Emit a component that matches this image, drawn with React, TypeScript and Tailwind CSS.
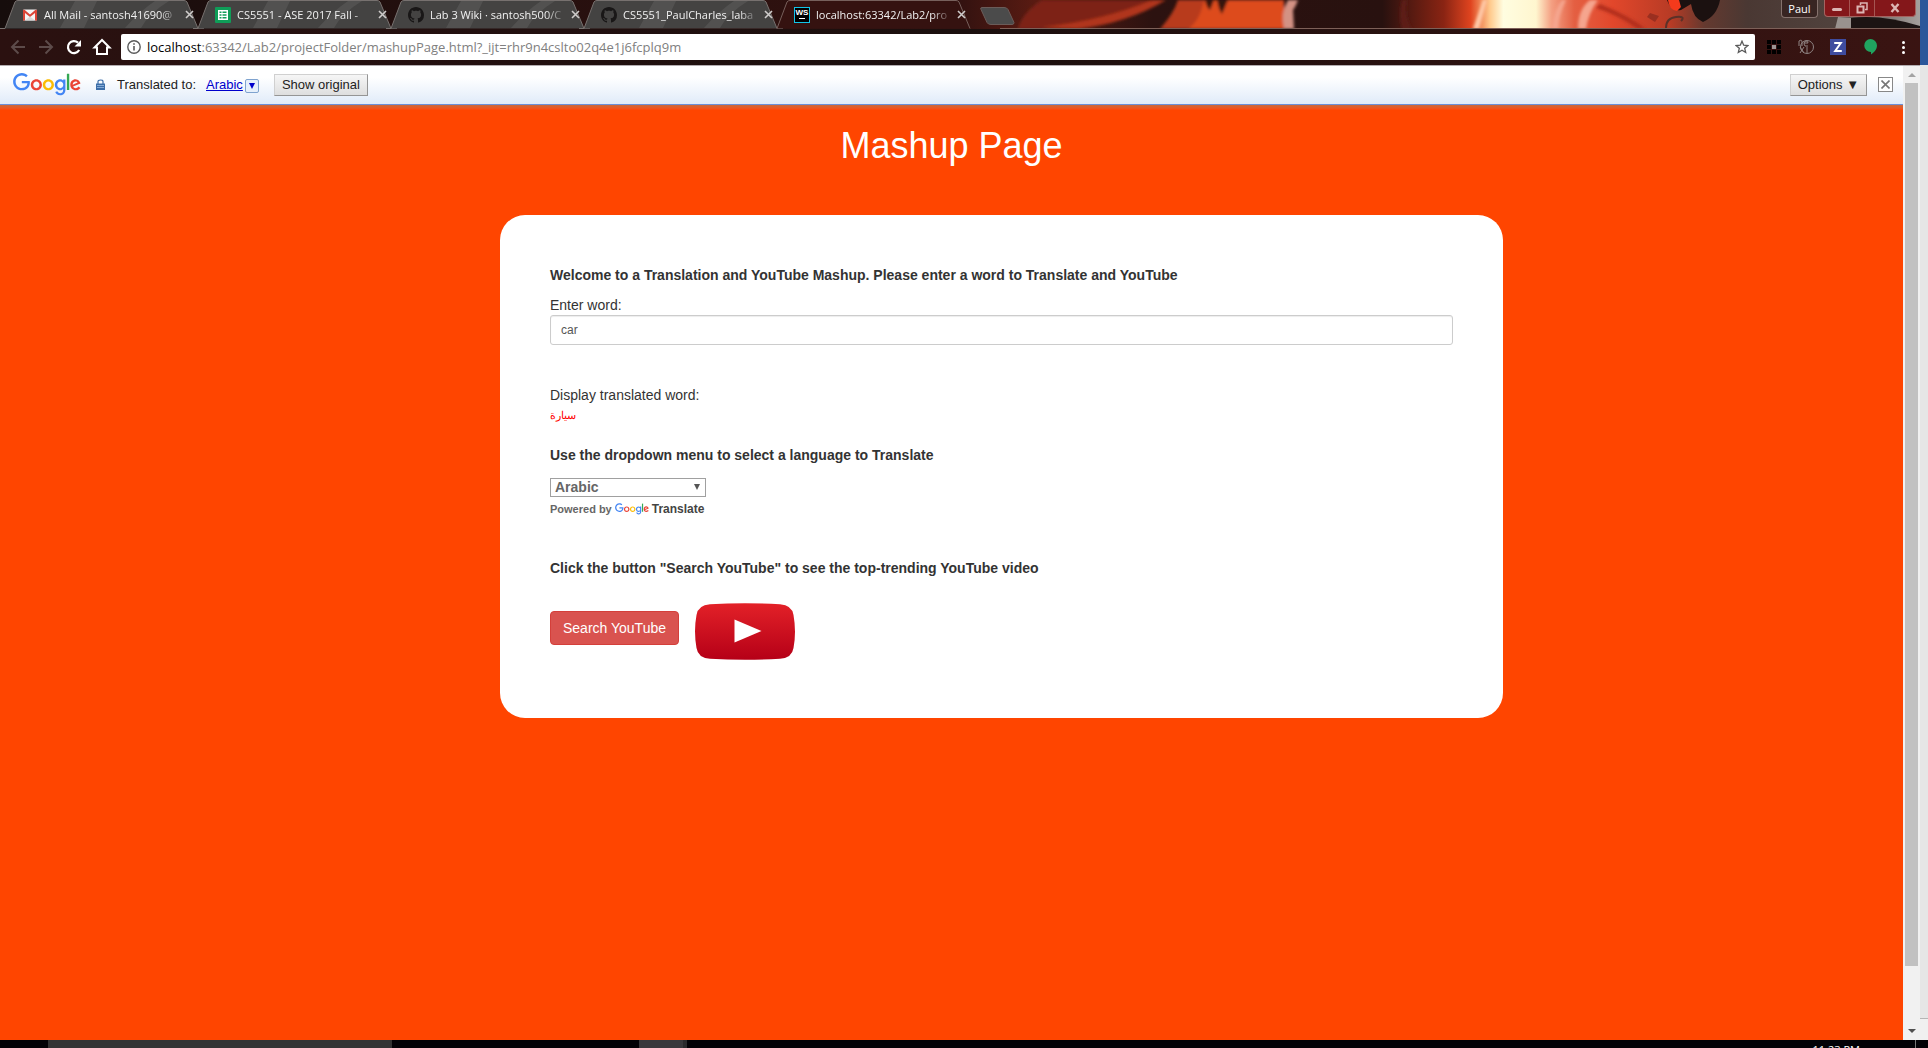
import React, { useId } from "react";

const UI = "font-['Open_Sans','Noto_Sans',sans-serif]";

function GoogleLogo({ className }: { className: string }) {
  return (
    <svg viewBox="0 0 272 92" className={className} role="img" aria-label="Google">
      <path fill="#EA4335" d="M115.75 47.18c0 12.77-9.99 22.18-22.25 22.18s-22.25-9.41-22.25-22.18C71.25 34.32 81.24 25 93.5 25s22.25 9.32 22.25 22.18zm-9.74 0c0-7.98-5.79-13.44-12.51-13.44S80.99 39.2 80.99 47.18c0 7.9 5.79 13.44 12.51 13.44s12.51-5.55 12.51-13.44z" />
      <path fill="#FBBC05" d="M163.75 47.18c0 12.77-9.99 22.18-22.25 22.18s-22.25-9.41-22.25-22.18c0-12.85 9.99-22.18 22.25-22.18s22.25 9.32 22.25 22.18zm-9.74 0c0-7.98-5.79-13.44-12.51-13.44s-12.51 5.46-12.51 13.44c0 7.9 5.79 13.44 12.51 13.44s12.51-5.55 12.51-13.44z" />
      <path fill="#4285F4" d="M209.75 26.34v39.82c0 16.38-9.66 23.07-21.08 23.07-10.75 0-17.22-7.19-19.66-13.07l8.48-3.53c1.51 3.61 5.21 7.87 11.17 7.87 7.31 0 11.84-4.51 11.84-13v-3.19h-.34c-2.18 2.69-6.38 5.04-11.68 5.04-11.09 0-21.25-9.66-21.25-22.09 0-12.52 10.16-22.26 21.25-22.26 5.29 0 9.49 2.35 11.68 4.96h.34v-3.61h9.25zm-8.56 20.92c0-7.81-5.21-13.52-11.84-13.52-6.72 0-12.35 5.71-12.35 13.52 0 7.73 5.63 13.36 12.35 13.36 6.63 0 11.84-5.63 11.84-13.36z" />
      <path fill="#34A853" d="M225 3v65h-9.5V3h9.5z" />
      <path fill="#EA4335" d="M262.02 54.48l7.56 5.04c-2.44 3.61-8.32 9.83-18.48 9.83-12.6 0-22.01-9.74-22.01-22.18 0-13.19 9.49-22.18 20.92-22.18 11.51 0 17.14 9.16 18.98 14.11l1.01 2.52-29.65 12.28c2.27 4.45 5.8 6.72 10.75 6.72 4.96 0 8.4-2.44 10.92-6.14zm-23.27-7.98l19.82-8.23c-1.09-2.77-4.37-4.7-8.23-4.7-4.95 0-11.84 4.37-11.59 12.93z" />
      <path fill="#4285F4" d="M35.29 41.41V32H67c.31 1.64.47 3.58.47 5.68 0 7.06-1.93 15.79-8.15 22.01-6.05 6.3-13.78 9.66-24.02 9.66C16.32 69.35.36 53.89.36 34.91.36 15.93 16.32.47 35.3.47c10.5 0 17.98 4.12 23.6 9.49l-6.64 6.64c-4.03-3.78-9.49-6.72-16.97-6.72-13.86 0-24.7 11.17-24.7 25.03 0 13.86 10.84 25.03 24.7 25.03 8.99 0 14.11-3.61 17.39-6.89 2.66-2.66 4.41-6.46 5.1-11.65l-22.49.01z" />
    </svg>
  );
}

function GmailIcon() {
  return (
    <svg viewBox="0 0 16 16" className="size-4 shrink-0" aria-hidden="true">
      <rect x="1" y="2.5" width="14" height="11" rx="1" fill="#f5f5f5" />
      <path d="M1 3.5v10h2V6l5 4 5-4v7.5h2v-10c0-1-1-1-1.5-.7L8 7.6 2.5 2.8C2 2.5 1 2.5 1 3.5z" fill="#db4437" />
      <path d="M3 13.5 8 9.5l5 4z" fill="#d8d8d8" />
    </svg>
  );
}

function SheetsIcon() {
  return (
    <svg viewBox="0 0 16 16" className="size-4 shrink-0" aria-hidden="true">
      <rect width="16" height="16" rx="1" fill="#0f9d58" />
      <path d="M3 3h10v10H3z" fill="#fff" />
      <path d="M4.5 4.5h2V6h-2zM7.5 4.5h4V6h-4zM4.5 7.2h2v1.5h-2zM7.5 7.2h4v1.5h-4zM4.5 10h2v1.5h-2zM7.5 10h4v1.5h-4z" fill="#0f9d58" />
    </svg>
  );
}

function GithubIcon() {
  return (
    <svg viewBox="0 0 16 16" className="size-4 shrink-0" aria-hidden="true">
      <path fill="#191717" d="M8 0C3.58 0 0 3.58 0 8c0 3.54 2.29 6.53 5.47 7.59.4.07.55-.17.55-.38 0-.19-.01-.82-.01-1.49-2.01.37-2.53-.49-2.69-.94-.09-.23-.48-.94-.82-1.13-.28-.15-.68-.52-.01-.53.63-.01 1.08.58 1.23.82.72 1.21 1.87.87 2.33.66.07-.52.28-.87.51-1.07-1.78-.2-3.64-.89-3.64-3.95 0-.87.31-1.59.82-2.15-.08-.2-.36-1.02.08-2.12 0 0 .67-.21 2.2.82.64-.18 1.32-.27 2-.27s1.36.09 2 .27c1.53-1.04 2.2-.82 2.2-.82.44 1.1.16 1.92.08 2.12.51.56.82 1.27.82 2.15 0 3.07-1.87 3.75-3.65 3.95.29.25.54.73.54 1.48 0 1.07-.01 1.93-.01 2.2 0 .21.15.46.55.38A8.01 8.01 0 0 0 16 8c0-4.42-3.58-8-8-8z" />
    </svg>
  );
}

function WebStormIcon() {
  return (
    <span className="flex size-4 shrink-0 flex-col items-center border border-[#12c4e8] bg-black font-['Liberation_Sans',sans-serif] text-[8px] leading-[10px] font-bold text-white">
      WS
      <span className="h-px w-[6px] bg-white" />
    </span>
  );
}

const tabs = [
  { title: "All Mail - santosh41690@", icon: <GmailIcon />, active: false },
  { title: "CS5551 - ASE 2017 Fall -", icon: <SheetsIcon />, active: false },
  { title: "Lab 3 Wiki · santosh500/C", icon: <GithubIcon />, active: false },
  { title: "CS5551_PaulCharles_laba", icon: <GithubIcon />, active: false },
  { title: "localhost:63342/Lab2/pro", icon: <WebStormIcon />, active: true },
];

function Tab({ title, icon, active }: { title: string; icon: React.ReactNode; active: boolean }) {
  return (
    <div className={"relative -mr-[11px] h-[29px] w-[204px] shrink-0 " + (active ? "z-10" : "")}>
      <svg viewBox="0 0 204 29" className="absolute inset-0 size-full" aria-hidden="true">
        <path
          d="M0 28.5h5L15 2q1-1.5 3-1.5h166q2 0 3 1.5l11 26.5h6"
          fill={active ? "#351210" : "#444342"}
          stroke={active ? "none" : "#77716f"}
        />
        {!active && <path d="M60 28 75 1h22L84 28zM125 28q15-17 30-27h14q-20 12-28 27z" fill="#fff" opacity=".08" />}
        {active && <path d="M5 28.5 15 2q1-1.5 3-1.5h166q2 0 3 1.5l11 26.5" fill="none" stroke="#77605c" />}
      </svg>
      <div className="relative flex h-[29px] items-center pr-[10px] pl-[22px]">
        {icon}
        <button type="button" className="ml-[6px] w-[136px] [mask-image:linear-gradient(to_right,#000_85%,transparent)] text-left text-[11px] leading-4 whitespace-nowrap text-[#f1f1f1]">
          {title}
        </button>
        <button type="button" aria-label="Close tab" className="ml-[5px] flex size-[9px] items-center">
          <svg viewBox="0 0 9 9" className="size-[9px]" aria-hidden="true">
            <path d="M1 1l7 7M8 1 1 8" stroke="#cfcccb" strokeWidth="1.6" />
          </svg>
        </button>
      </div>
    </div>
  );
}

function ThemeArt() {
  return (
    <svg viewBox="0 0 1920 29" preserveAspectRatio="none" className="absolute inset-0 size-full" aria-hidden="true">
      <defs>
        <linearGradient id="base">
          <stop offset="0" stopColor="#160d0c" />
          <stop offset=".5" stopColor="#331210" />
          <stop offset=".54" stopColor="#5a1b12" />
          <stop offset=".6" stopColor="#2c1210" />
          <stop offset=".72" stopColor="#28110f" />
          <stop offset=".752" stopColor="#8a2413" />
          <stop offset=".766" stopColor="#e0441f" />
          <stop offset=".776" stopColor="#ffc98c" />
          <stop offset=".783" stopColor="#fffde0" />
          <stop offset=".8" stopColor="#fff6cf" />
          <stop offset=".808" stopColor="#f4a083" />
          <stop offset=".82" stopColor="#e45f42" />
          <stop offset=".84" stopColor="#e2472b" />
          <stop offset=".87" stopColor="#b83b25" />
          <stop offset=".888" stopColor="#64392f" />
          <stop offset=".91" stopColor="#4a3833" />
          <stop offset=".96" stopColor="#51433e" />
          <stop offset="1" stopColor="#a5a09d" />
        </linearGradient>
        <filter id="soft" x="-10%" y="-30%" width="120%" height="160%">
          <feGaussianBlur stdDeviation="1.5" />
        </filter>
      </defs>
      <rect width="1920" height="29" fill="url(#base)" />
      <g filter="url(#soft)">
        <path d="M1018 29q4-16 24-29h118q-30 20-80 29z" fill="#7d2416" />
        <path d="M1042 27q60-6 110-27h14q-40 24-90 29z" fill="#b0351a" />
        <path d="M1160 29q14-16 18-29h40q8 14 4 29z" fill="#b83a1a" />
        <path d="M1188 29q12-8 16-29h80v29z" fill="#dd4c1c" />
        <path d="M1205 0q2 8 5 10l4-10zM1217 0q2 10 5 14l6-14z" fill="#35120e" />
        <path d="M1284 29q-4-16 4-29h10q-2 6-5 10l1 19z" fill="#d39284" />
        <path d="M1402 29q-4-14 0-29h5q-3 16 5 29z" fill="#5d1d12" />
        <path d="M1473 29 1483 0h4l-8 29z" fill="#ffc9a8" />
        <path d="M1552 29q2-20 10-29h4q-8 16-8 29zM1578 29q0-20 12-29h8q-10 14-12 29z" fill="#f5a58e" />
        <path d="M1600 4q30 12 46 25h-8q-20-14-42-21z" fill="#b22f1c" />
      </g>
      <path d="M1650 13l9 3-4 6-8-5z" fill="#9a2f20" />
      <path d="M1667 0q4 12 14 10l10-6q2 14 12 18 14-6 17-22z" fill="#1b1110" />
      <path d="M1668 0q1 10 9 11l4-4-2-7z" fill="#f43a1c" />
      <path d="M1666 28q0-10 10-11t5 4" fill="none" stroke="#5b3128" strokeWidth="2" />
      <path d="M1835 29l3-12 16 1-3 11z" fill="#99928e" />
      <path d="M1851 18q30-4 69 8v3h-69z" fill="#1c1413" />
      <path d="M1000 28.5h920" stroke="#7d6058" strokeWidth="1" />
    </svg>
  );
}

function TabStrip() {
  return (
    <header className="relative flex h-[29px] overflow-hidden">
      <ThemeArt />
      <nav aria-label="Tabs" className="relative flex">
        {tabs.map((t) => (
          <Tab key={t.title} {...t} />
        ))}
        <button type="button" aria-label="New tab" className="mt-[7px] ml-[14px] h-[18px] w-9">
          <svg viewBox="0 0 36 18" className="h-[18px] w-9" aria-hidden="true">
            <path d="M3 .5h22q3 0 4 2l6 13q0 2-2 2H12q-3 0-4-2L2 2.500q-1-2 1-2z" fill="#4b4b4b" stroke="#6b5c59" />
          </svg>
        </button>
      </nav>
      <div className="relative mr-1 ml-auto flex h-[18px] items-start">
        <button type="button" className="mr-[6px] h-[18px] w-[37px] rounded-b border border-t-0 border-[#85726d] bg-[#382522] text-[11px] leading-[17px] text-white">
          Paul
        </button>
        <div className="flex h-[17px] divide-x divide-[#a55552] overflow-hidden rounded-b border border-t-0 border-[#a56360] bg-[#84171a]">
          <button type="button" aria-label="Minimize" className="flex w-[25px] items-center justify-center">
            <span className="mt-[3px] h-[3px] w-[10px] rounded-xs bg-[#dcb5b3]" />
          </button>
          <button type="button" aria-label="Restore" className="flex w-[25px] items-center justify-center">
            <svg viewBox="0 0 12 12" className="size-3" aria-hidden="true">
              <path d="M4.500 3V1h6.500v6.500H9" fill="none" stroke="#dcb5b3" strokeWidth="1.500" />
              <path d="M1.500 4.500h6v6h-6z" fill="none" stroke="#dcb5b3" strokeWidth="2" />
            </svg>
          </button>
          <button type="button" aria-label="Close" className="flex w-[40px] items-center justify-center">
            <svg viewBox="0 0 10 10" className="size-[10px]" aria-hidden="true">
              <path d="M1.500 1l7 8M8.500 1l-7 8" stroke="#dcb5b3" strokeWidth="2.400" />
            </svg>
          </button>
        </div>
      </div>
    </header>
  );
}

function Toolbar() {
  return (
    <div className="flex h-[37px] items-center border-b border-[#b3adb0] bg-linear-to-r from-[#2b1110] via-[#1b0f0e] to-[#3a1412] pr-[14px] pl-[10px]">
      <div className="flex w-[111px] items-center gap-[12px]">
        <button type="button" aria-label="Back" className="size-4">
          <svg viewBox="0 0 16 16" className="size-4" fill="none" stroke="#5d4b4a" strokeWidth="2" aria-hidden="true">
            <path d="M15 8H2.500M8.500 1.500 2 8l6.500 6.500" />
          </svg>
        </button>
        <button type="button" aria-label="Forward" className="size-4">
          <svg viewBox="0 0 16 16" className="size-4" fill="none" stroke="#5d4b4a" strokeWidth="2" aria-hidden="true">
            <path d="M1 8h12.500M7.500 1.500 14 8l-6.500 6.500" />
          </svg>
        </button>
        <button type="button" aria-label="Reload" className="size-4">
          <svg viewBox="0 0 16 16" className="size-4" aria-hidden="true">
            <path d="M13.200 11A6 6 0 1 1 12 3.600" fill="none" stroke="#fff" strokeWidth="2.200" />
            <path d="M15 1v6.500H8.500z" fill="#fff" />
          </svg>
        </button>
        <button type="button" aria-label="Home" className="size-4">
          <svg viewBox="0 0 16 16" className="size-4 overflow-visible" aria-hidden="true">
            <path d="M8 1 .5 8.500H3V15h10V8.500h2.500z" fill="none" stroke="#fff" strokeWidth="2" />
          </svg>
        </button>
      </div>
      <div className="flex h-[26px] min-w-0 flex-1 items-center rounded-xs bg-white px-[6px]">
        <svg viewBox="0 0 14 14" className="size-[14px] shrink-0" aria-hidden="true">
          <circle cx="7" cy="7" r="6.200" fill="none" stroke="#5a5a5a" strokeWidth="1.400" />
          <path d="M7 6v4.500M7 3.300v1.500" stroke="#5a5a5a" strokeWidth="1.600" />
        </svg>
        <p className="ml-[6px] min-w-0 flex-1 truncate text-[13px] leading-5 text-[#808080]">
          <span className="text-black">localhost</span>
          :63342/Lab2/projectFolder/mashupPage.html?_ijt=rhr9n4cslto02q4e1j6fcplq9m
        </p>
        <button type="button" aria-label="Bookmark this page" className="size-[14px]">
          <svg viewBox="0 0 14 14" className="size-[14px]" aria-hidden="true">
            <path d="M7 1.200l1.700 4 4.200.3-3.200 2.800 1 4.200L7 10.300l-3.700 2.200 1-4.200L1.100 5.500l4.200-.3z" fill="none" stroke="#5a5a5a" strokeWidth="1.300" />
          </svg>
        </button>
      </div>
      <div className="ml-3 flex items-center">
        <button type="button" aria-label="Grid extension" className="size-[14px]">
          <svg viewBox="0 0 14 14" className="size-[14px]" aria-hidden="true">
            <path d="M0 0h4v4H0zM5 0h4v4H5zM10 0h4v4h-4zM0 5h4v4H0zM10 5h4v4h-4zM0 10h4v4H0zM5 10h4v4H5zM10 10h4v4h-4z" fill="#000" />
            <path d="M5 5h4v4H5z" fill="#9c9594" />
          </svg>
        </button>
        <button type="button" aria-label="Next extension" className="ml-[17px] size-4">
          <svg viewBox="0 0 16 16" className="size-4" fill="none" stroke="#8f8483" aria-hidden="true">
            <circle cx="9" cy="8" r="6.500" />
            <path d="M1 7V2q3-2 3 1v4M6 4h4q0-2-2-2T6 5q0 3 4 2M2 8l4 6M6 8l-4 6M9 8v6" />
          </svg>
        </button>
        <button type="button" aria-label="Z extension" className="ml-[16px] size-4">
          <svg viewBox="0 0 16 16" className="size-4" aria-hidden="true">
            <path d="M0 0h16v16H0z" fill="#3e4c9f" />
            <path d="M4.200 4h6.600L5.200 12h6.600" fill="none" stroke="#fff" strokeWidth="2" />
          </svg>
        </button>
        <button type="button" aria-label="Hangouts" className="ml-[17px] h-4 w-[15px]">
          <svg viewBox="0 0 15 16" className="h-4 w-[15px]" aria-hidden="true">
            <path d="M7.500 0A6.500 6.500 0 0 1 14 6.500c0 4-3.500 7.500-6 9V13A6.500 6.500 0 0 1 7.500 0z" fill="#20a35f" />
          </svg>
        </button>
        <button type="button" aria-label="Menu" className="ml-[24px] flex w-[4px] flex-col gap-[2px]">
          <span className="size-[3px] rounded-full bg-white" />
          <span className="size-[3px] rounded-full bg-white" />
          <span className="size-[3px] rounded-full bg-white" />
        </button>
      </div>
    </div>
  );
}

const barButton =
  "h-[22px] border border-t-[#d0d0d0] border-r-[#959595] border-b-[#959595] border-l-[#d0d0d0] bg-linear-to-b from-[#f6f6f6] to-[#dedede] px-[7px] leading-[18px]";

function TranslateBar() {
  return (
    <div className="flex h-[39px] items-center border-b border-[#6b90da] bg-linear-to-b from-white from-30% to-[#e0ebf9] pr-[10px] pb-px pl-[13px] text-[13px] leading-4 text-[#222]">
      <GoogleLogo className="h-[23px] w-[68px]" />
      <svg viewBox="0 0 9 11" className="ml-[15px] h-[11px] w-[9px]" aria-hidden="true">
        <path d="M2 5V2.500Q2 1 4.500 1T7 2.500V5" fill="none" stroke="#3c6ea8" strokeWidth="1.200" />
        <path d="M0 4.500h9V11H0z" fill="#3c6ea8" />
        <path d="M1 6.500h7M1 8.500h7" stroke="#86abd6" />
      </svg>
      <span className="ml-[12px]">Translated to:</span>
      <a href="#language" className="ml-[10px] text-[#0000cc] underline">Arabic</a>
      <button type="button" aria-label="Choose language" className="mt-[3px] ml-[2px] flex size-[14px] items-center justify-center rounded-xs border border-[#7fa3cf] bg-[#e6f0fb]">
        <svg viewBox="0 0 6 6" className="size-[6px]" aria-hidden="true">
          <path d="M0 0h6L3 6z" fill="#0000cc" />
        </svg>
      </button>
      <button type="button" className={barButton + " ml-[15px]"}>Show original</button>
      <button type="button" className={barButton + " ml-auto"}>Options ▼</button>
      <button type="button" aria-label="Close translation bar" className="ml-[11px] flex size-[15px] items-center justify-center border border-[#888] bg-white">
        <svg viewBox="0 0 9 9" className="size-[9px]" aria-hidden="true">
          <path d="M.5.5l8 8M8.500.5l-8 8" stroke="#777" strokeWidth="1.600" />
        </svg>
      </button>
    </div>
  );
}

function YouTubeLogo() {
  return (
    <svg viewBox="0 0 100 57" className="h-[57px] w-[100px]" role="img" aria-label="YouTube">
      <defs>
        <linearGradient id="tube" x1="0" y1="0" x2="0" y2="1">
          <stop offset="0" stopColor="#e32128" />
          <stop offset="1" stopColor="#b50017" />
        </linearGradient>
      </defs>
      <path d="M15 1.200Q50-.6 85 1.200 97 2 98.500 12q3 17 0 33-1.500 10-13.500 10.800-35 1.800-70 0Q3 55 1.500 45-1.500 28 1.500 12 3 2 15 1.200z" fill="url(#tube)" />
      <path d="M39.500 16.500 66.500 28 39.500 39.500z" fill="#fff" />
    </svg>
  );
}

function MashupCard() {
  const word = useId();
  const lang = useId();
  return (
    <main className="mr-[400px] ml-[500px] rounded-[25px] bg-white px-[50px] pt-[50px] pb-[58px] text-[14px] leading-5 text-[#333]">
      <h2 className="font-bold">
        Welcome to a Translation and YouTube Mashup. Please enter a word to Translate and YouTube
      </h2>
      <label htmlFor={word} className="mt-[10px] block">Enter word:</label>
      <input
        id={word}
        type="text"
        defaultValue="car"
        className="block h-[30px] w-full rounded-[3px] border border-[#ccc] px-[10px] text-[12px] leading-[18px] text-[#555] shadow-[inset_0_1px_1px_rgba(0,0,0,0.075)]"
      />
      <p className="mt-[40px]">Display translated word:</p>
      <p lang="ar" className="text-[11px] leading-5 text-[#ff0000]">
        <span dir="rtl">سيارة</span>
      </p>
      <h2 className="mt-5 font-bold">Use the dropdown menu to select a language to Translate</h2>
      <label htmlFor={lang} className="sr-only">Language</label>
      <div className="relative mt-[13px] w-[156px]">
        <select
          id={lang}
          defaultValue="ar"
          className="block h-[19px] w-full appearance-none border border-[#a0a0a0] bg-white px-1 text-[14px] leading-[17px] font-bold text-[#666]"
        >
          <option value="ar">Arabic</option>
        </select>
        <svg viewBox="0 0 6 6" className="pointer-events-none absolute top-[6px] right-[6px] size-[6px]" aria-hidden="true">
          <path d="M0 0h6L3 6z" fill="#555" />
        </svg>
      </div>
      <p className="mt-[2px] flex items-center text-[11px] leading-5 font-bold text-[#666]">
        Powered by
        <GoogleLogo className="mx-[3px] h-3 w-[34px]" />
        <a href="#translate" className="text-[12px] text-[#444]">Translate</a>
      </p>
      <h2 className="mt-[39px] font-bold">
        Click the button "Search YouTube" to see the top-trending YouTube video
      </h2>
      <div className="mt-[25px] flex items-start">
        <button type="button" className="mt-2 h-[34px] rounded-sm border border-[#d43f3a] bg-[#d9534f] px-3 text-white">
          Search YouTube
        </button>
        <span className="ml-4">
          <YouTubeLogo />
        </span>
      </div>
    </main>
  );
}

function Scrollbar() {
  return (
    <div className="flex w-[17px] flex-col items-center bg-[#f1f1f1]" aria-hidden="true">
      <div className="flex h-[17px] items-center">
        <svg viewBox="0 0 8 4" className="h-1 w-2"><path d="M0 4h8L4 0z" fill="#a3a3a3" /></svg>
      </div>
      <div className="w-[13px] flex-94 bg-[#c1c1c1]" />
      <div className="flex-6" />
      <div className="flex h-[18px] items-center">
        <svg viewBox="0 0 8 4" className="h-1 w-2"><path d="M0 0h8L4 4z" fill="#505050" /></svg>
      </div>
    </div>
  );
}

export default function App() {
  return (
    <div className={"flex h-screen flex-col overflow-hidden bg-black " + UI}>
      <div className="flex min-h-0 flex-1">
        <div className="flex min-w-0 flex-1 flex-col">
          <TabStrip />
          <Toolbar />
          <div className="flex min-h-0 flex-1 font-['Liberation_Sans',Arial,sans-serif]">
            <div className="flex min-w-0 flex-1 flex-col bg-[#ff4500]">
              <TranslateBar />
              <div className="h-[5px] bg-linear-to-b from-[#c8693c] to-[#ff4500]" />
              <h1 className="mt-4 mb-[49px] text-center text-[36px] leading-10 text-white">Mashup Page</h1>
              <MashupCard />
            </div>
            <Scrollbar />
          </div>
        </div>
        <div className="flex w-2 flex-col bg-[#f0f0f0]">
          <div className="h-[65px] bg-[#2b579a]" />
          <div className="mb-[21px] flex-1 border-b border-[#b5b5b5] bg-[#e6e6e6]" />
        </div>
      </div>
      <footer className="flex h-2 overflow-hidden bg-[#030206]">
        <div className="ml-[48px] w-[344px] bg-[#333]" />
        <div className="ml-[247px] w-[48px] border-r-4 border-[#2a2a2c] bg-[#39383b]" />
        <time className="mr-[55px] ml-auto pt-[2px] text-[11px] leading-4 text-white">11:23 PM</time>
        <div className="mr-3 w-px bg-[#777]" />
      </footer>
    </div>
  );
}
